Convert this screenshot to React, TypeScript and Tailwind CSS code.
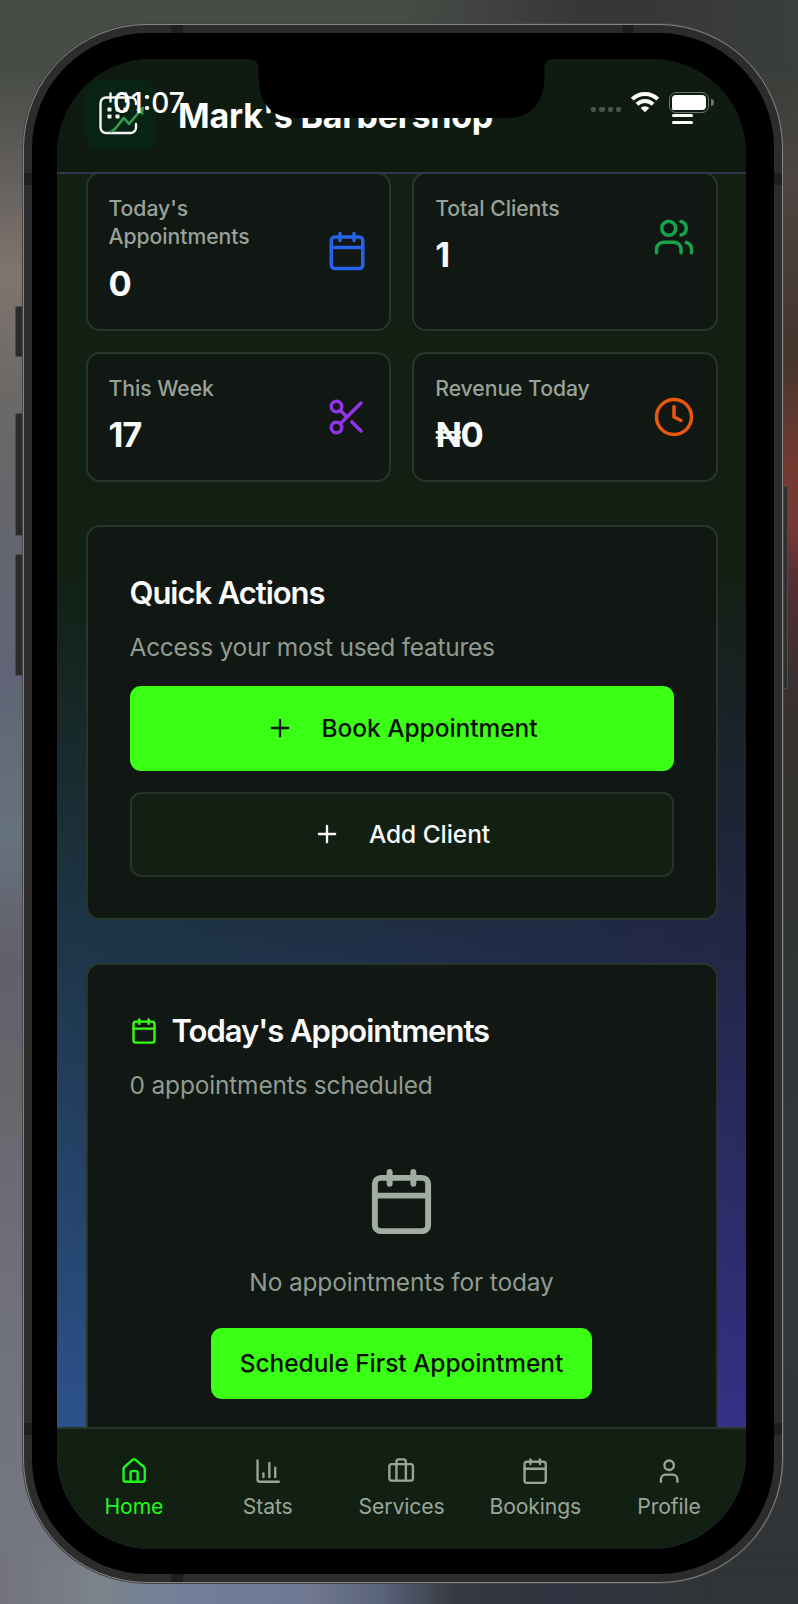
import type { ReactNode } from "react";
import {
  Calendar,
  Users,
  Scissors,
  Clock,
  Plus,
  House,
  ChartColumn,
  Briefcase,
  User,
} from "lucide-react";

type StatProps = { label: ReactNode; value: string; icon: ReactNode };

function StatCard({ label, value, icon }: StatProps) {
  return (
    <div className="rounded-[14px] border-2 border-[#26362a] bg-[#111713]">
      <div className="flex items-center justify-between pt-[20px] pr-[20.500px] pb-[21px] pl-[21px]">
        <div>
          <div className="text-[21.2px] leading-[28.3px] font-medium tracking-[-0.060px] text-[#98a298]">{label}</div>
          <div className="mt-[9px] text-[34.500px] leading-[48px] font-bold tracking-[-1px] text-[#fafafa]">
            {value}
          </div>
        </div>
        {icon}
      </div>
    </div>
  );
}

function LogoMark() {
  return (
    <svg className="size-[48px]" viewBox="0 0 48 48" fill="none" strokeLinecap="round" strokeLinejoin="round">
      <path
        d="M38 12V10.500a5 5 0 0 0-5-5H8a5.500 5.500 0 0 0-5.500 5.500V35.500A5.500 5.500 0 0 0 8 41H32.500a5.500 5.500 0 0 0 5.500-5.500V32"
        stroke="#f4f4f4"
        strokeWidth="2.400"
      />
      <path d="M12.500 1.500v8M28 1.500v8" stroke="#f4f4f4" strokeWidth="2.400" />
      <g fill="#f4f4f4">
        <rect x="9.500" y="15.500" width="4" height="4" rx="0.800" />
        <rect x="17.500" y="15.500" width="4" height="4" rx="0.800" />
        <rect x="25.500" y="15.500" width="4" height="4" rx="0.800" />
        <rect x="9.500" y="22.500" width="4" height="4" rx="0.800" />
        <rect x="17.500" y="22.500" width="4" height="4" rx="0.800" />
      </g>
      <path d="M13 39.500c5-1 8-9 13-13.500l5 6 11-13" stroke="#2f9e55" strokeWidth="2.600" />
      <path d="M46 14.500l-1 9-7.500-6z" fill="#2f9e55" />
    </svg>
  );
}

function StatusIcons() {
  return (
    <div className="absolute top-[91px] left-[591px] z-20 flex items-start">
      <div className="mt-[16px] flex gap-[3px]">
        <span className="size-[5.300px] rounded-[2px] bg-[#49544a]" />
        <span className="size-[5.300px] rounded-[2px] bg-[#49544a]" />
        <span className="size-[5.300px] rounded-[2px] bg-[#49544a]" />
        <span className="size-[5.300px] rounded-[2px] bg-[#49544a]" />
      </div>
      <svg className="ml-[9px] h-[22px] w-[30px]" viewBox="0 0 30 22" fill="none" stroke="#fff">
        <path d="M2.200 8.200a18.100 18.100 0 0 1 25.600 0" strokeWidth="4" />
        <path d="M7 13.300a11.300 11.300 0 0 1 16 0" strokeWidth="3.800" />
        <path d="M15 21.200l-4.300-4.300a6.100 6.100 0 0 1 8.600 0z" fill="#fff" stroke="none" />
      </svg>
      <div className="mt-px ml-[9px] flex items-center">
        <div className="h-[21px] w-[40px] rounded-[7px] border-[1.500px] border-[#6d766e] p-[2px]">
          <div className="h-full rounded-[4px] bg-white" />
        </div>
        <span className="ml-[2px] h-[7px] w-[2.500px] rounded-r-full bg-[#6d766e]" />
      </div>
    </div>
  );
}

function Notch() {
  return (
    <svg className="absolute top-[56px] left-[248px] z-30 h-[63px] w-[306px]" viewBox="0 0 306 63">
      <path
        fill="#000"
        d="M0 0V3.200C7 3.200 10.500 6 10.500 13V19C10.500 46 22 62 48 62H258C284 62 296.500 46 296.500 19V13C296.500 6 299 3.200 306 3.200V0Z"
      />
    </svg>
  );
}

const tabs = [
  { label: "Home", Icon: House, color: "text-[#1cf71c]" },
  { label: "Stats", Icon: ChartColumn, color: "text-[#98a69a]" },
  { label: "Services", Icon: Briefcase, color: "text-[#98a69a]" },
  { label: "Bookings", Icon: Calendar, color: "text-[#98a69a]" },
  { label: "Profile", Icon: User, color: "text-[#98a69a]" },
];

function SideButton({ className }: { className: string }) {
  return <span className={`absolute w-[10px] rounded-l-[2px] border border-[#4d4d4d] bg-[#2a2a2a] ${className}`} />;
}

export default function App() {
  return (
    <div className="relative h-[1604px] w-[798px] overflow-hidden bg-[linear-gradient(90deg,#474c47_0%,#474c47_50%,#363634_75%,#3a3f3b_100%)] pt-[24px] pl-[23px] font-['Inter','Liberation_Sans',sans-serif]">
      <div className="absolute top-0 left-0 h-full w-[400px] bg-[linear-gradient(180deg,transparent_4%,#5f5c59_10%,#80756f_17%,#6c6966_24%,#66676a_30%,#606476_42%,#66727d_52%,#625f6b_60%,#69656c_68%,#6f707c_80%,#74777f_95%)] [mask-image:linear-gradient(90deg,#000_10%,transparent_90%)]" />
      <div className="absolute top-0 right-0 h-full w-[200px] bg-[linear-gradient(180deg,transparent_4%,#4c4541_11%,#43352c_22%,#733a30_29%,#733836_33%,#552f32_36%,#3b3031_42%,#35322d_47%,#303435_60%,#33383b_75%,#313436_100%)] [mask-image:linear-gradient(90deg,transparent,#000_70%)]" />
      <div className="absolute bottom-0 left-0 h-[80px] w-full bg-[linear-gradient(90deg,#73737b_0%,#7b838b_12%,#72809a_22%,#707892_39%,#59637a_48%,#35393f_57%,#303340_70%,#303436_90%)] [mask-image:linear-gradient(180deg,transparent,#000_60%)]" />

      <SideButton className="top-[306px] left-[15px] h-[51px]" />
      <SideButton className="top-[413px] left-[15px] h-[123px]" />
      <SideButton className="top-[554px] left-[15px] h-[122px]" />
      <span className="absolute top-[486px] left-[780px] h-[203px] w-[8px] rounded-r-[2px] border border-[#4d4d4d] bg-[#2f2f2f]" />

      <div className="relative h-[1559px] w-[760px] overflow-hidden rounded-[124px] border-[1.500px] border-[#858585] bg-[#2c2c2c] p-[8px] shadow-[0_0_0_1px_#444]">
        <span className="absolute top-0 left-[147px] h-[8px] w-[12px] bg-[#1e1e1e]" />
        <span className="absolute top-0 left-[598px] h-[8px] w-[12px] bg-[#1e1e1e]" />
        <span className="absolute bottom-0 left-[147px] h-[8px] w-[12px] bg-[#1e1e1e]" />
        <span className="absolute top-[148px] left-0 h-[12px] w-[8px] bg-[#1e1e1e]" />
        <span className="absolute top-[148px] right-0 h-[12px] w-[8px] bg-[#1e1e1e]" />
        <span className="absolute bottom-[147px] left-0 h-[12px] w-[8px] bg-[#1e1e1e]" />
        <span className="absolute right-0 bottom-[147px] h-[12px] w-[8px] bg-[#1e1e1e]" />

        <div className="relative h-full w-full rounded-[115px] bg-black pt-[26px] pl-[25px]">
          <div className="flex h-[1490px] w-[689px] flex-col overflow-hidden rounded-[94px] bg-[linear-gradient(180deg,#122013_0%,#122013_34%,transparent_94%),linear-gradient(90deg,#2d5490,#37308a)]">
            <header className="flex h-[115px] shrink-0 items-start border-b-2 border-[#2c3b4c] bg-[#0f1b10] pt-[21px] pl-[29px]">
              <div className="flex size-[70px] items-center justify-center rounded-[14px] bg-[#082314] pt-px pl-[2px]">
                <LogoMark />
              </div>
              <h1 className="mt-[14px] ml-[22px] w-[420px] text-[34px] leading-[44px] font-bold tracking-[-0.200px] whitespace-nowrap text-white">
                Mark's Barbershop
              </h1>
              <div className="mt-[27px] ml-[74px] flex flex-col gap-[4.500px]">
                <span className="h-[2.500px] w-[21px] rounded bg-white" />
                <span className="h-[2.500px] w-[21px] rounded bg-white" />
                <span className="h-[2.500px] w-[21px] rounded bg-white" />
              </div>
            </header>

            <main className="flex min-h-0 flex-1 flex-col overflow-hidden px-[28.500px]">
              <div className="-mt-[2px] grid shrink-0 grid-cols-2 gap-[21.500px]">
                <StatCard
                  label={<>Today's<br />Appointments</>}
                  value="0"
                  icon={<Calendar className="size-[42px] text-[#2563eb]" />}
                />
                <StatCard label="Total Clients" value="1" icon={<Users className="size-[42px] text-[#16a34a]" />} />
                <StatCard label="This Week" value="17" icon={<Scissors className="size-[42px] text-[#9333ea]" />} />
                <StatCard label="Revenue Today" value="₦0" icon={<Clock className="size-[42px] text-[#ea580c]" />} />
              </div>

              <section className="mt-[43px] h-[395px] shrink-0 rounded-[14px] border-2 border-[#26362a] bg-[#111713] px-[42px] pt-[45px]">
                <h2 className="text-[31px] leading-[42px] font-semibold tracking-[-1.050px] text-[#fafafa]">Quick Actions</h2>
                <p className="mt-[16px] text-[24.500px] leading-[34px] tracking-[-0.270px] text-[#909b91]">Access your most used features</p>
                <button className="mt-[21.500px] flex h-[85px] w-full items-center justify-center rounded-[11px] bg-[#3bff14] pb-px text-[24.500px] font-medium tracking-[-0.060px] text-[#0a0f0a]">
                  <Plus className="mr-[28px] size-[28px]" />
                  Book Appointment
                </button>
                <button className="mt-[21px] flex h-[85px] w-full items-center justify-center rounded-[11px] border-2 border-[#26322a] bg-[#122013] pb-px text-[24.500px] font-medium tracking-[-0.060px] text-[#fafafa]">
                  <Plus className="mr-[28px] size-[28px]" />
                  Add Client
                </button>
              </section>

              <section className="mt-[43px] h-[560px] shrink-0 rounded-[14px] border-2 border-[#26362a] bg-[#111713] px-[42px] pt-[45px]">
                <h2 className="flex items-center text-[31px] leading-[42px] font-semibold tracking-[-1px] text-[#fafafa]">
                  <Calendar className="mr-[14px] size-[28px] text-[#3bff14]" />
                  Today's Appointments
                </h2>
                <p className="mt-[16px] text-[24.500px] leading-[34px] tracking-[-0.180px] text-[#909b91]">0 appointments scheduled</p>
                <div className="mt-[64px] flex flex-col items-center">
                  <Calendar className="size-[71px] text-[#a1ada2]" />
                  <p className="mt-[28px] text-[24.500px] leading-[34px] tracking-[-0.170px] text-[#909b91]">No appointments for today</p>
                  <button className="mt-[29px] h-[71px] w-[381px] rounded-[11px] bg-[#3bff14] pb-px text-[24.500px] font-medium tracking-[-0.060px] whitespace-nowrap text-[#0a0f0a]">
                    Schedule First Appointment
                  </button>
                </div>
              </section>
            </main>

            <nav className="grid h-[122px] shrink-0 grid-cols-5 border-t-2 border-[#26362a] bg-[#122013] px-[10px] pt-[28px]">
              {tabs.map(({ label, Icon, color }) => (
                <div key={label} className={`flex flex-col items-center ${color}`}>
                  <Icon className="size-[28.300px]" />
                  <span className="mt-[7px] text-[21.2px] leading-[28px] tracking-[-0.120px]">{label}</span>
                </div>
              ))}
            </nav>
          </div>
        </div>
      </div>

      <span className="absolute top-[85px] left-[113px] z-20 text-[28px] leading-[36px] font-medium text-white">01:07</span>
      <StatusIcons />
      <Notch />
    </div>
  );
}
